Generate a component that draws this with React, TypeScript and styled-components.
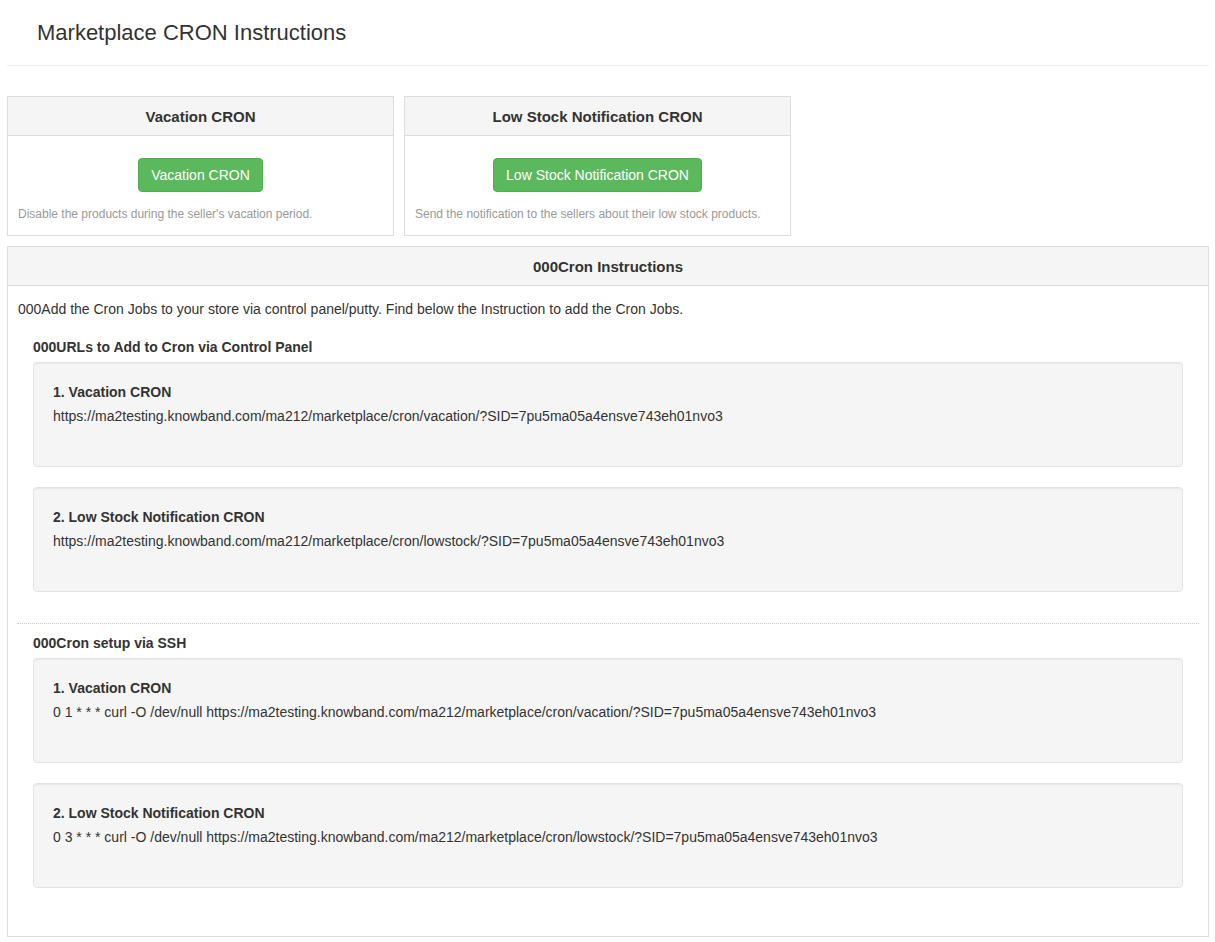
import React from "react";
import styled, { createGlobalStyle } from "styled-components";

const Global = createGlobalStyle`
  html, body { margin: 0; padding: 0; background: #fff; }
  body {
    font-family: "Liberation Sans", Arial, Helvetica, sans-serif;
    font-size: 14px;
    line-height: 20px;
    color: #333;
  }
  * { box-sizing: border-box; }
`;

const Page = styled.div`
  padding: 0 6px 6px 7px;
`;

const PageHeader = styled.div`
  height: 66px;
  display: flex;
  align-items: center;
  padding: 1px 0 0 30px;
  border-bottom: 1px solid #eee;
`;

const PageTitle = styled.h1`
  margin: 0;
  font-size: 22px;
  font-weight: 400;
  line-height: 26px;
  color: #333;
`;

const CardRow = styled.div`
  display: grid;
  grid-template-columns: 387px 387px;
  gap: 10px;
  margin-top: 30px;
`;

const Panel = styled.section`
  border: 1px solid #ddd;
  background: #fff;
`;

const PanelHeading = styled.div`
  background: #f5f5f5;
  border-bottom: 1px solid #ddd;
  height: 39px;
  padding-top: 2px;
  display: flex;
  align-items: center;
  justify-content: center;
  font-size: 15px;
  font-weight: 700;
  color: #333;
`;

const CardBody = styled.div`
  padding: 22px 10px 12px;
  display: flex;
  flex-direction: column;
  align-items: center;
`;

const GreenButton = styled.button`
  height: 34px;
  padding: 6px 12px;
  font-family: inherit;
  font-size: 14px;
  line-height: 20px;
  color: #fff;
  background: #5cb85c;
  border: 1px solid #4cae4c;
  border-radius: 4px;
  cursor: pointer;
`;

const HelpText = styled.p`
  align-self: stretch;
  margin: 14px 0 0;
  font-size: 12px;
  line-height: 17px;
  color: #999;
`;

const BigPanel = styled(Panel)`
  margin-top: 10px;
`;

const BigBody = styled.div`
  padding: 13px 10px 28px;
`;

const Intro = styled.p`
  margin: 0 0 18px;
`;

const Section = styled.div`
  padding: 0 15px;
`;

const SectionTitle = styled.h4`
  margin: 0 0 5px;
  font-size: 14px;
  line-height: 20px;
  font-weight: 700;
`;

const Well = styled.div`
  background: #f5f5f5;
  border: 1px solid #e3e3e3;
  border-radius: 4px;
  box-shadow: inset 0 1px 1px rgba(0, 0, 0, 0.05);
  padding: 19px 19px 40px;
  margin-bottom: 20px;
`;

const WellTitle = styled.div`
  font-weight: 700;
  margin-bottom: 4px;
`;

const WellText = styled.div``;

const Divider = styled.hr`
  margin: 31px -1px 9px;
  border: 0;
  border-top: 1px dotted #ccc;
`;

const base = "https://ma2testing.knowband.com/ma212/marketplace/cron/";
const sid = "?SID=7pu5ma05a4ensve743eh01nvo3";

export default function App() {
  return (
    <>
      <Global />
      <Page>
        <PageHeader>
          <PageTitle>Marketplace CRON Instructions</PageTitle>
        </PageHeader>
        <CardRow>
          <Panel>
            <PanelHeading>Vacation CRON</PanelHeading>
            <CardBody>
              <GreenButton>Vacation CRON</GreenButton>
              <HelpText>Disable the products during the seller's vacation period.</HelpText>
            </CardBody>
          </Panel>
          <Panel>
            <PanelHeading>Low Stock Notification CRON</PanelHeading>
            <CardBody>
              <GreenButton>Low Stock Notification CRON</GreenButton>
              <HelpText>Send the notification to the sellers about their low stock products.</HelpText>
            </CardBody>
          </Panel>
        </CardRow>
        <BigPanel>
          <PanelHeading>000Cron Instructions</PanelHeading>
          <BigBody>
            <Intro>
              000Add the Cron Jobs to your store via control panel/putty. Find below the Instruction to add the Cron Jobs.
            </Intro>
            <Section>
              <SectionTitle>000URLs to Add to Cron via Control Panel</SectionTitle>
              <Well>
                <WellTitle>1. Vacation CRON</WellTitle>
                <WellText>{base + "vacation/" + sid}</WellText>
              </Well>
              <Well>
                <WellTitle>2. Low Stock Notification CRON</WellTitle>
                <WellText>{base + "lowstock/" + sid}</WellText>
              </Well>
            </Section>
            <Divider />
            <Section>
              <SectionTitle>000Cron setup via SSH</SectionTitle>
              <Well>
                <WellTitle>1. Vacation CRON</WellTitle>
                <WellText>{"0 1 * * * curl -O /dev/null " + base + "vacation/" + sid}</WellText>
              </Well>
              <Well>
                <WellTitle>2. Low Stock Notification CRON</WellTitle>
                <WellText>{"0 3 * * * curl -O /dev/null " + base + "lowstock/" + sid}</WellText>
              </Well>
            </Section>
          </BigBody>
        </BigPanel>
      </Page>
    </>
  );
}
